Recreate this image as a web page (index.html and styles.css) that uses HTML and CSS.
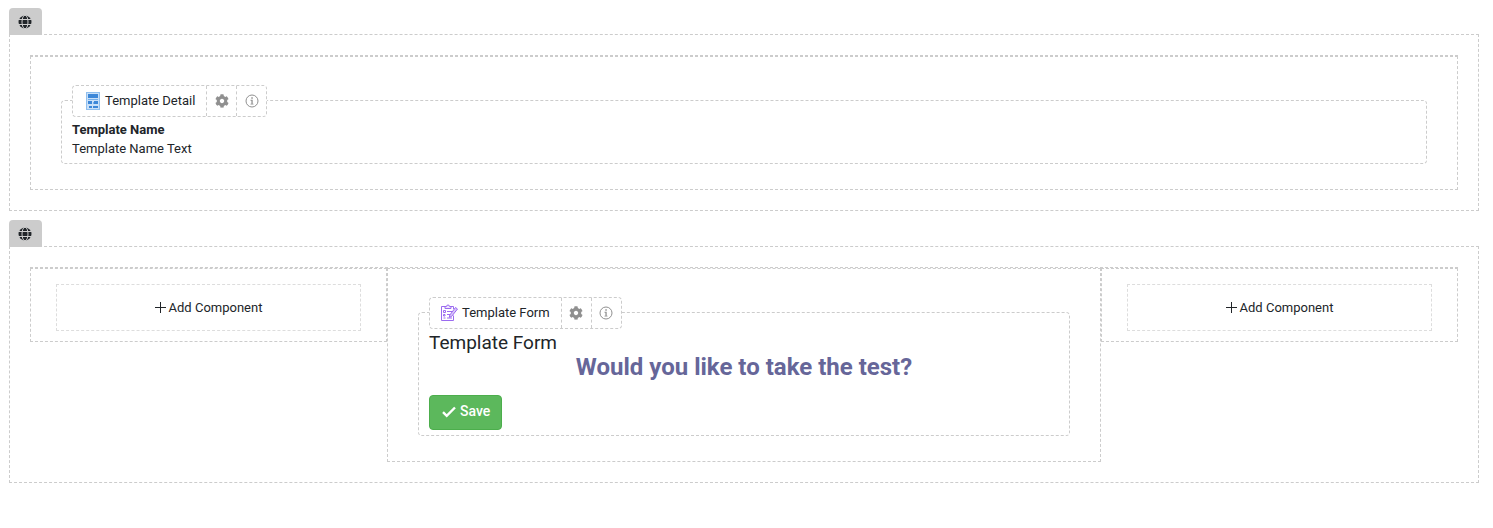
FILE: index.html
```
<!DOCTYPE html>
<html lang="en">
  <head>
    <meta charset="UTF-8" />
    <meta name="viewport" content="width=device-width, initial-scale=1.0" />
    <title>Page Designer</title>
    <link rel="stylesheet" href="styles.css">
  </head>
  <body>
    <svg class="sprite" width="0" height="0" aria-hidden="true">
      <symbol id="icon-globe" viewBox="0 0 14 14">
        <circle cx="7" cy="7" r="6.5" fill="#212529" />
        <g fill="none" stroke="#ccc" stroke-width="1">
          <ellipse cx="7" cy="7" rx="3" ry="6.8" />
          <path d="M0 4.500h14M0 9.500h14" />
        </g>
      </symbol>
      <symbol id="icon-cog" viewBox="0 0 512 512">
        <path fill="currentColor" d="M487.4 315.7l-42.6-24.6c4.300-23.200 4.300-47 0-70.200l42.600-24.600c4.900-2.800 7.100-8.600 5.500-14-11.100-35.600-30-67.800-54.700-94.600-3.800-4.100-10-5.100-14.800-2.300L380.800 110c-17.900-15.400-38.500-27.300-60.800-35.100V25.800c0-5.600-3.900-10.500-9.400-11.700-36.700-8.200-74.300-7.800-109.200 0-5.500 1.200-9.400 6.100-9.400 11.700V75c-22.200 7.900-42.800 19.800-60.800 35.100L88.700 85.500c-4.900-2.800-11-1.900-14.800 2.300-24.700 26.700-43.600 58.900-54.700 94.600-1.700 5.400.6 11.200 5.500 14L67.300 221c-4.300 23.200-4.300 47 0 70.200l-42.600 24.600c-4.900 2.800-7.100 8.600-5.500 14 11.100 35.600 30 67.800 54.700 94.600 3.800 4.100 10 5.100 14.800 2.300l42.600-24.600c17.900 15.400 38.500 27.300 60.800 35.100v49.200c0 5.600 3.900 10.500 9.400 11.700 36.700 8.200 74.300 7.800 109.200 0 5.500-1.200 9.400-6.100 9.400-11.700v-49.200c22.200-7.900 42.800-19.800 60.800-35.100l42.600 24.600c4.900 2.800 11 1.900 14.800-2.300 24.700-26.700 43.600-58.900 54.700-94.600 1.500-5.500-.7-11.300-5.600-14.100zM256 336c-44.100 0-80-35.900-80-80s35.900-80 80-80 80 35.900 80 80-35.900 80-80 80z" />
      </symbol>
      <symbol id="icon-info" viewBox="0 0 14 14">
        <circle cx="7" cy="7" r="6" fill="none" stroke="currentColor" />
        <path fill="currentColor" d="M6.300 3.300h1.500v1.500H6.300zM5.500 5.800h2.200v3.900h.8v.9h-3v-.9h.9v-3h-.9z" />
      </symbol>
      <symbol id="icon-plus" viewBox="0 0 11 11">
        <path fill="none" stroke="currentColor" d="M0 5.500h11M5.500 0v11" />
      </symbol>
    </svg>

    <div class="section">
      <button class="section-tab" aria-label="Section settings">
        <svg width="14" height="14"><use href="#icon-globe" /></svg>
      </button>
      <div class="section-body">
        <div class="row">
          <div class="column">
            <div class="component">
              <div class="component-header">
                <div class="component-title">
                  <svg width="17" height="20" viewBox="-2 -2 17 20">
                    <rect x="0.500" y="0.500" width="13" height="17" fill="#c9e0f8" stroke="#90bfee" />
                    <path fill="#3c87d8" d="M2 2h10v4H2zM2 9h4v3H2zM8 9h4v3H8zM3 14h3v2H3zM7 14h5v2H7z" />
                    <path fill="#74aeea" d="M2 7h10v1H2zM7 10h1v2H7z" />
                  </svg>
                  Template Detail
                </div>
                <button aria-label="Settings"><svg width="14" height="14"><use href="#icon-cog" /></svg></button>
                <button aria-label="Info"><svg width="14" height="14"><use href="#icon-info" /></svg></button>
              </div>
              <div class="field-label">Template Name</div>
              <div class="field-text">Template Name Text</div>
            </div>
          </div>
        </div>
      </div>
    </div>

    <div class="section">
      <button class="section-tab" aria-label="Section settings">
        <svg width="14" height="14"><use href="#icon-globe" /></svg>
      </button>
      <div class="section-body">
        <div class="row">
          <div class="column column-side">
            <button class="btn-add">
              <svg width="11" height="11"><use href="#icon-plus" /></svg>
              Add Component
            </button>
          </div>
          <div class="column column-main">
            <div class="component">
              <div class="component-header">
                <div class="component-title">
                  <svg width="17" height="20" viewBox="0 -2 17 20">
                    <g fill="none" stroke="#9b6bf0">
                      <path d="M4.500 2.500h-4v14h12v-5M12.500 5V2.500h-3" />
                      <path fill="#efe6fd" d="M4 4.500v-2h1.500a1.500 1.500 0 0 1 3 0H10v2z" />
                      <path d="M2.500 6.500h2v2h-2zM2.500 10.500h1.500v1.500H2.500zM2.500 14h2M6 7.500h5M6 10.500h3M6 14h5" />
                      <path fill="#d9c5fb" d="M14.500 3.500l2 1.500-6 7.500-2.200.8.500-2.300z" />
                    </g>
                  </svg>
                  Template Form
                </div>
                <button aria-label="Settings"><svg width="14" height="14"><use href="#icon-cog" /></svg></button>
                <button aria-label="Info"><svg width="14" height="14"><use href="#icon-info" /></svg></button>
              </div>
              <div class="form-title">Template Form</div>
              <h2>Would you like to take the test?</h2>
              <button class="btn-save">
                <svg width="14" height="12" viewBox="0 0 14 12"><path fill="none" stroke="#fff" stroke-width="2.400" d="M1 6.200l3.700 3.600L13 1.500" /></svg>
                Save
              </button>
            </div>
          </div>
          <div class="column column-side">
            <button class="btn-add">
              <svg width="11" height="11"><use href="#icon-plus" /></svg>
              Add Component
            </button>
          </div>
        </div>
      </div>
    </div>
  </body>
</html>
```
FILE: styles.css
```
* {
  box-sizing: border-box;
}

body {
  font-family: Roboto, sans-serif;
  font-size: 13px;
  line-height: 19px;
  color: #212529;
  background-color: #fff;
  margin: 8px 14px 8px 9px;
}

button {
  font: inherit;
  color: inherit;
  padding: 0;
  border: none;
  background: none;
  cursor: pointer;
}

svg {
  flex: none;
}

.sprite {
  display: none;
}

.section {
  margin-bottom: 9px;
}

.section-tab {
  display: flex;
  align-items: center;
  justify-content: center;
  width: 33px;
  height: 27px;
  margin-bottom: -1px;
  padding-right: 1px;
  position: relative;
  background-color: #ccc;
  border-radius: 4px 4px 0 0;
}

.section-body {
  border: 1px dashed #ccc;
  padding: 20px;
}

.row {
  display: flex;
  align-items: flex-start;
  border-top: 1px dashed #ccc;
}

.column {
  width: 100%;
  min-width: 0;
  border: 1px dashed #ccc;
  padding: 43px 30px 25px;
}

.column-main {
  width: 50%;
}

.column-side {
  width: 25%;
  padding: 15px 25px 10px;
}

.component {
  border: 1px dashed #ccc;
  border-radius: 4px;
  padding: 0 10px 5px;
}

.component-header {
  display: flex;
  width: fit-content;
  height: 32px;
  margin-top: -16px;
  margin-bottom: 3px;
  position: relative;
  background-color: #fff;
  border: 1px dashed #ccc;
  border-radius: 4px;
}

.component-title {
  display: flex;
  align-items: center;
  gap: 4px;
  padding: 0 11px 2px;
}

.component-header button {
  display: flex;
  align-items: center;
  justify-content: center;
  width: 30px;
  padding-bottom: 1px;
  color: #909090;
  border-left: 1px dashed #ccc;
}

.field-label {
  font-weight: 700;
}

.form-title {
  font-size: 19px;
  line-height: 22px;
}

h2 {
  font-size: 24px;
  line-height: 26px;
  font-weight: 700;
  color: #666699;
  text-align: center;
  margin: 0 0 15px;
}

.btn-add {
  display: flex;
  align-items: center;
  justify-content: center;
  gap: 3px;
  width: 100%;
  height: 47px;
  border: 1px dashed #ddd;
}

.btn-save {
  display: flex;
  align-items: center;
  gap: 4px;
  height: 35px;
  padding: 0 11px 2px 12px;
  font-size: 14px;
  font-weight: 500;
  color: #fff;
  background-color: #5cb85c;
  border: 1px solid #4cae4c;
  border-radius: 4px;
}
```
